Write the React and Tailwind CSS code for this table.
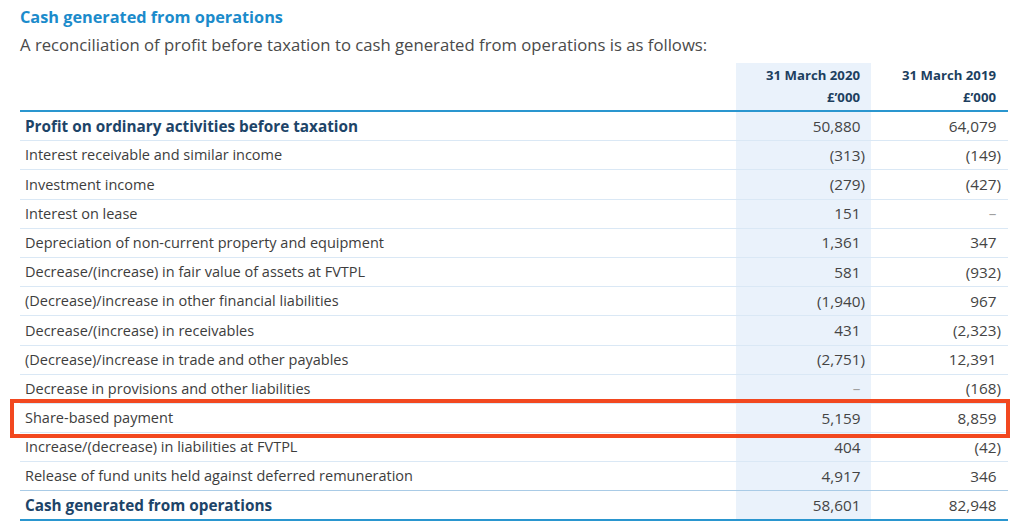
const rows = [
  { label: 'Profit on ordinary activities before taxation', a: '50,880', b: '64,079', bold: true },
  { label: 'Interest receivable and similar income', a: '(313)', b: '(149)' },
  { label: 'Investment income', a: '(279)', b: '(427)' },
  { label: 'Interest on lease', a: '151', b: null },
  { label: 'Depreciation of non-current property and equipment', a: '1,361', b: '347' },
  { label: 'Decrease/(increase) in fair value of assets at FVTPL', a: '581', b: '(932)' },
  { label: '(Decrease)/increase in other financial liabilities', a: '(1,940)', b: '967' },
  { label: 'Decrease/(increase) in receivables', a: '431', b: '(2,323)' },
  { label: '(Decrease)/increase in trade and other payables', a: '(2,751)', b: '12,391' },
  { label: 'Decrease in provisions and other liabilities', a: null, b: '(168)' },
  { label: 'Share-based payment', a: '5,159', b: '8,859', highlight: true },
  { label: 'Increase/(decrease) in liabilities at FVTPL', a: '404', b: '(42)' },
  { label: 'Release of fund units held against deferred remuneration', a: '4,917', b: '346' },
  { label: 'Cash generated from operations', a: '58,601', b: '82,948', bold: true, total: true },
];

// digits line up; a closing paren hangs to the right
function Amount({ value }) {
  if (value === null) {
    return (
      <span className="text-[#a0a0a0]">
        –<span className="invisible">)</span>
      </span>
    );
  }
  if (value.startsWith('(')) return <span>{value}</span>;
  return (
    <span>
      {value}
      <span className="invisible">)</span>
    </span>
  );
}

export default function App() {
  return (
    <div
      className="w-[1019px] h-[531px] bg-white pt-[6px] pl-[20px] overflow-hidden"
      style={{ fontFamily: '"Open Sans", "Noto Sans", sans-serif' }}
    >
      <h1 className="text-[16.3px] leading-[22px] font-bold text-[#1b8bcb]">
        Cash generated from operations
      </h1>
      <p className="text-[16.7px] leading-[24px] text-[#4a4a4a] mt-[5px]">
        A reconciliation of profit before taxation to cash generated from operations is as follows:
      </p>

      <div className="w-[988px] mt-[6px]">
        {/* header */}
        <div className="flex border-b-2 border-[#2a96cf] text-[13.2px] leading-[22px] font-bold text-[#1d3f5f]">
          <div className="flex-1" />
          <div className="w-[135px] bg-[#eaf2fb] pr-[11px] pt-[1px] pb-[2px] text-right">
            <div>31 March 2020</div>
            <div>£’000</div>
          </div>
          <div className="w-[137px] pr-[12px] pt-[1px] pb-[2px] text-right">
            <div>31 March 2019</div>
            <div>£’000</div>
          </div>
        </div>

        {rows.map((r, i) => (
          <div
            key={i}
            className={
              'relative flex h-[29.2px] items-center ' +
              (r.total
                ? 'border-b-2 border-[#2a96cf] '
                : i === rows.length - 2
                ? 'border-b border-[#a9cbe6] '
                : 'border-b border-[#dae8f5] ')
            }
          >
            <div
              className={
                'flex-1 pl-[5px] whitespace-nowrap ' +
                (r.bold ? 'text-[15.3px] font-bold text-[#1d4468]' : 'text-[14.5px] text-[#3d3d3d]')
              }
            >
              {r.label}
            </div>
            <div className="w-[135px] h-full bg-[#eaf2fb] flex items-center justify-end pr-[6px] text-[15.3px] text-[#444]">
              <Amount value={r.a} />
            </div>
            <div className="w-[137px] h-full flex items-center justify-end pr-[7px] text-[15.3px] text-[#444]">
              <Amount value={r.b} />
            </div>
            {r.highlight && (
              <div className="absolute z-10 -left-[10px] -right-[2px] -top-[5px] -bottom-[6px] border-4 border-[#f2481f] pointer-events-none" />
            )}
          </div>
        ))}
      </div>
    </div>
  );
}
